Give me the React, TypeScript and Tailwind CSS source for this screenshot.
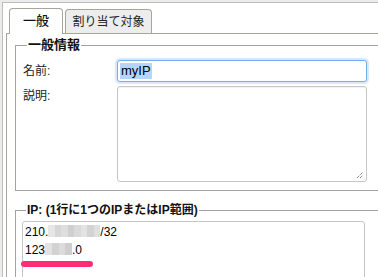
import React from "react";

const FONT = { fontFamily: '"Liberation Sans", "Noto Sans CJK JP", sans-serif' };

function Blur({ w, shades }: { w: number; shades: string[] }) {
  return (
    <span className="inline-flex h-[12px] align-[-1px]" style={{ width: w }}>
      {shades.map((c, i) => (
        <span key={i} className="h-full flex-1" style={{ backgroundColor: c }} />
      ))}
    </span>
  );
}

export default function App() {
  return (
    <div
      className="relative h-[277px] w-[378px] overflow-hidden bg-[#ececec] pl-[2px] pt-[2px] text-[#111]"
      style={FONT}
    >
      <div className="flex h-[300px] flex-col border-l border-t border-[#bdbdbd] bg-white pl-[3px]">
        {/* tabs */}
        <div className="flex items-end gap-[2px] pl-[3px] pt-[5px]">
          <div className="relative z-10 -mb-px flex h-[26px] w-[54px] items-center justify-center rounded-t-[4px] border border-b-0 border-[#a7a69a] bg-white pb-[1px] text-[13px] font-medium">
            一般
          </div>
          <div className="flex h-[24px] w-[87px] items-center justify-center rounded-t-[4px] border border-b-0 border-[#a7a69a] bg-[#ededed] text-[12px] text-[#222]">
            割り当て対象
          </div>
        </div>
        {/* panel */}
        <div className="flex-1 border-l border-t border-[#a7a69a] pl-[8px] pt-[4px]">
          <fieldset className="w-[380px] border border-[#a3a3a3] pb-[8px] pl-[7px]">
            <legend className="ml-[4px] px-[1px] text-[13px] font-bold leading-[14px]">一般情報</legend>
            <div className="mt-[8px] grid grid-cols-[94px_250px] gap-y-[4px]">
              <div className="pt-[3px] text-[12px] leading-[16px] text-[#222]">名前:</div>
              <div className="flex h-[22px] items-center rounded-[3px] border border-[#74aef0] bg-white pl-[2px] shadow-[0_0_1px_2px_rgba(140,185,245,0.35)]">
                <span className="bg-[#b4d5fe] px-[1px] text-[13px] leading-[16px] text-black">myIP</span>
              </div>
              <div className="pt-[2px] text-[12px] leading-[16px] text-[#222]">説明:</div>
              <div className="relative h-[96px] rounded-[3px] border border-[#c6c6c6] bg-white shadow-[inset_0_1px_1px_rgba(0,0,0,0.06)]">
                <svg className="absolute bottom-[2px] right-[2px]" width="8" height="8" viewBox="0 0 8 8">
                  <path d="M1 7 L7 1 M4 7 L7 4" stroke="#555" strokeWidth="1" strokeDasharray="1 1" fill="none" />
                </svg>
              </div>
            </div>
          </fieldset>
          <fieldset className="mt-[12px] w-[380px] border border-[#a3a3a3] pl-[6px]">
            <legend className="ml-[4px] px-[1px] text-[12px] font-bold leading-[14px]">
              IP: (1行に1つのIPまたはIP範囲)
            </legend>
            <div className="mt-[4px] h-[80px] w-[343px] rounded-[3px] border border-[#c6c6c6] bg-white pl-[2px] pt-[1px] text-[12px] leading-[18px] text-black">
              <div>
                210.
                <Blur w={52} shades={["#e6e6e6", "#d6d6d6", "#dedede", "#cfcfcf", "#dadada", "#e3e3e3", "#d3d3d3", "#e0e0e0"]} />
                /32
              </div>
              <div>
                123
                <Blur w={27} shades={["#e2e2e2", "#d2d2d2", "#dcdcdc", "#cecece"]} />
                .0
              </div>
            </div>
          </fieldset>
        </div>
      </div>
      <div className="absolute left-[21px] top-[261px] h-[6px] w-[72px] rounded-full bg-[#ff2d76]" />
    </div>
  );
}
